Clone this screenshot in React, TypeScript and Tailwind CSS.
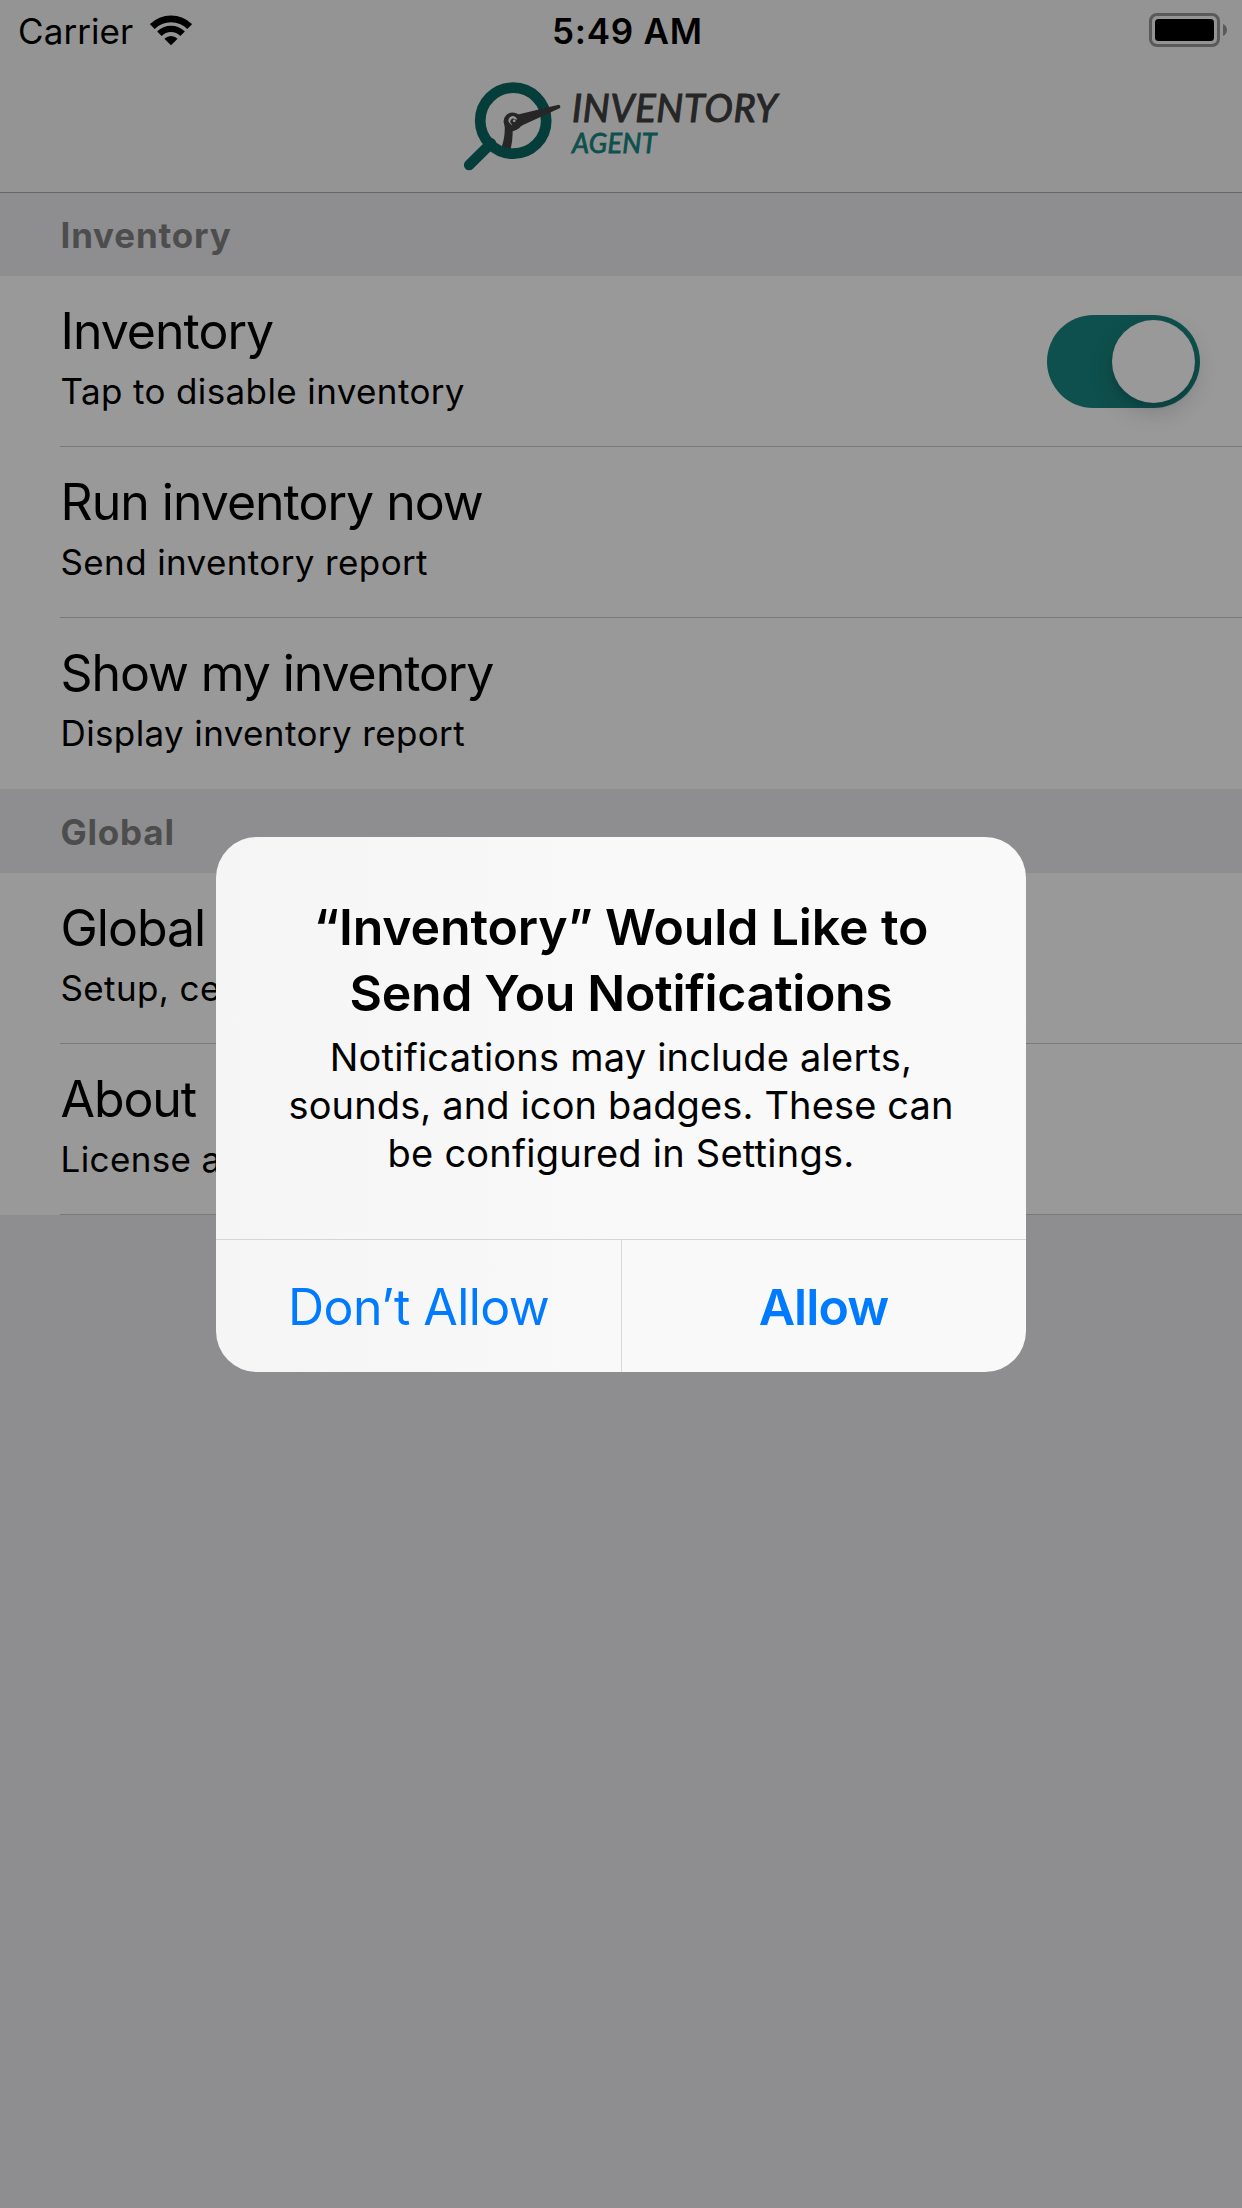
import type { ReactNode } from 'react';

function WifiIcon() {
  return (
    <svg className="-mt-px" width="42" height="31" viewBox="0 0 42 31" fill="none" stroke="#000">
      <path d="M2.26 11.56A26.5 26.5 0 0 1 39.74 11.56" strokeWidth="6.8" />
      <path d="M9.4 18.7A16.4 16.4 0 0 1 32.6 18.7" strokeWidth="6.4" />
      <path d="M21 30.3L14.4 23.7A9.4 9.4 0 0 1 27.6 23.7Z" fill="#000" stroke="none" />
    </svg>
  );
}

function BatteryIcon() {
  return (
    <svg className="-mt-0.5" width="78" height="34" viewBox="0 0 78 34">
      <rect x="1.5" y="1.5" width="68" height="31" rx="6.5" fill="none" stroke="#5a5a5a" strokeWidth="3" />
      <rect x="6" y="6" width="59" height="22" rx="3.5" fill="#000" />
      <path d="M74 11C76.6 12.3 78 14.4 78 17S76.6 21.7 74 23Z" fill="#5a5a5a" />
    </svg>
  );
}

function LogoMark() {
  return (
    <svg width="120" height="105" viewBox="0 0 120 105" fill="none">
      <path d="M49.6 50Q50.4 62 46.6 72L55.5 75Q58 64 57.6 56L64 50Z" fill="#262626" />
      <circle cx="58.2" cy="45.7" r="33" stroke="#053d3a" strokeWidth="10.7" />
      <path d="M36 68.4L14.2 90" stroke="#053d3a" strokeWidth="10.6" strokeLinecap="round" />
      <path
        d="M62 39.8L102.6 29.9A1.9 1.9 0 0 1 104 33.6L68 50L57.6 56.4L52 51Z"
        fill="#262626"
      />
      <circle cx="57.8" cy="46.6" r="9.2" fill="#262626" />
      <path d="M54 47.6A4.4 4.4 0 1 1 62.2 44.8L60 44.2A2.6 2.6 0 0 0 56.6 48.8L57.2 50.6Z" fill="#949494" />
      <circle cx="59.2" cy="45.8" r="1.4" fill="#949494" />
    </svg>
  );
}

function SectionHeader({ children, className }: { children: ReactNode; className: string }) {
  return (
    <h2
      className={`flex items-center bg-[#8e8e91] pl-[60.5px] text-[35px] font-bold tracking-[0.8px] text-[#4d4d4d] ${className}`}
    >
      {children}
    </h2>
  );
}

type RowProps = {
  title: string;
  subtitle: string;
  tracking?: string;
  divider?: boolean;
  children?: ReactNode;
};

function Row({ title, subtitle, tracking = 'tracking-[-1px]', divider = true, children }: RowProps) {
  return (
    <div className="h-[171px] bg-[#999999] pl-[60px]">
      <div className={`flex h-full justify-between pr-[42px] ${divider ? 'border-b border-[#79797b]' : ''}`}>
        <div className="pt-[25px] pl-[0.5px] whitespace-nowrap">
          <div className={`text-[50px] leading-[60px] ${tracking}`}>{title}</div>
          <div className="mt-2 text-[35px] leading-[44px] tracking-[0.38px]">{subtitle}</div>
        </div>
        {children}
      </div>
    </div>
  );
}

function Toggle() {
  return (
    <div className="mt-[39px] h-[93px] w-[153px] rounded-full bg-[#0e504d] p-[5px]">
      <div className="ml-auto size-[83px] rounded-full bg-[#999999] shadow-[0_9px_24px_rgba(0,0,0,0.16),0_5px_4px_rgba(0,0,0,0.07)]" />
    </div>
  );
}

function PermissionAlert() {
  return (
    <div
      role="alertdialog"
      className="absolute top-[837px] left-[216px] flex h-[535px] w-[810px] flex-col overflow-hidden rounded-[41px] bg-linear-to-r from-[#f5f5f5] via-[#f9f9f9] via-50% to-[#f9f9f9] text-center whitespace-nowrap"
    >
      <div className="h-[402px] pt-[57px]">
        <div className="text-[50px] leading-[66px] font-semibold">
          <div className="tracking-[-0.13px]">“Inventory” Would Like to</div>
          <div className="tracking-[-0.34px]">Send You Notifications</div>
        </div>
        <div className="mt-[7px] text-[38px] leading-[48px]">
          <div className="tracking-[0.22px]">Notifications may include alerts,</div>
          <div className="tracking-[0.13px]">sounds, and icon badges. These can</div>
          <div className="tracking-[0.24px]">be configured in Settings.</div>
        </div>
      </div>
      <div className="flex h-[133px] border-t border-[#d5d5d7] text-[50px] leading-[60px] text-[#007aff]">
        <button className="w-[406px] border-r border-[#dadadc] pt-px tracking-[-0.6px]">Don’t Allow</button>
        <button className="flex-1 pt-px pr-px font-semibold tracking-[-0.9px]">Allow</button>
      </div>
    </div>
  );
}

export default function App() {
  return (
    <div className="relative h-[2208px] w-[1242px] overflow-hidden bg-[#8e8e91] font-[Inter,sans-serif] text-black">
      <header className="h-[193px] border-b border-[#666668] bg-[#949494]">
        <div className="flex h-[62px] items-center pr-[15px] pl-[18px] text-[35px] leading-[44px]">
          <span className="w-[132px] tracking-[0.08px]">Carrier</span>
          <WifiIcon />
          <span className="ml-[360px] font-semibold tracking-[0.76px]">5:49 AM</span>
          <span className="ml-auto">
            <BatteryIcon />
          </span>
        </div>
        <div className="flex pt-[13px] pl-[455px] font-[Lato,sans-serif] italic">
          <LogoMark />
          <div className="-ml-[3px] pt-3 font-normal">
            <div className="text-[38px] leading-[40px] tracking-[0.7px] text-[#262626] [-webkit-text-stroke:1.1px_#262626]">
              INVENTORY
            </div>
            <div className="text-[27px] leading-[32px] tracking-[0.3px] text-[#0e504d] [-webkit-text-stroke:0.8px_#0e504d]">
              AGENT
            </div>
          </div>
        </div>
      </header>

      <SectionHeader className="h-[83px] pt-px">Inventory</SectionHeader>
      <Row title="Inventory" subtitle="Tap to disable inventory">
        <Toggle />
      </Row>
      <Row title="Run inventory now" subtitle="Send inventory report" />
      <Row
        title="Show my inventory"
        subtitle="Display inventory report"
        tracking="tracking-[-1.08px]"
        divider={false}
      />
      <SectionHeader className="h-[84px] pt-0.5">Global</SectionHeader>
      <Row title="Global" subtitle="Setup, certificate" />
      <Row title="About" subtitle="License and terms" tracking="tracking-[-1.1px]" />

      <PermissionAlert />
    </div>
  );
}
